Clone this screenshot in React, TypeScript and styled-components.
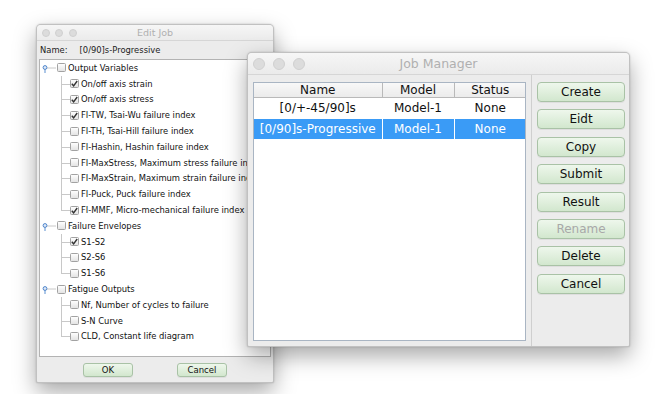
import React from 'react'
import styled, { createGlobalStyle } from 'styled-components'

const GlobalStyle = createGlobalStyle`
  html, body {
    margin: 0;
    padding: 0;
    background: #fff;
  }
  body {
    font-family: 'DejaVu Sans', 'Liberation Sans', sans-serif;
  }
`

const Desktop = styled.div`
  position: relative;
  width: 660px;
  height: 394px;
  overflow: hidden;
  background: #fff;
`

// windows sit on a free desktop, so they are placed by coordinates
const Window = styled.div<{ $x: number; $y: number; $w: number; $h: number }>`
  position: absolute;
  left: ${({ $x }) => $x}px;
  top: ${({ $y }) => $y}px;
  width: ${({ $w }) => $w}px;
  height: ${({ $h }) => $h}px;
  display: flex;
  flex-direction: column;
  box-sizing: border-box;
  background: #ececec;
  border: 1px solid rgba(0, 0, 0, 0.18);
  border-radius: 5px 5px 2px 2px;
  box-shadow: 0 9px 22px rgba(0, 0, 0, 0.34), 0 0 2px rgba(0, 0, 0, 0.2);
  overflow: hidden;
`

const TitleBar = styled.div<{ $h: number; $size: number }>`
  display: grid;
  grid-template-columns: 1fr auto 1fr;
  align-items: center;
  height: ${({ $h }) => $h}px;
  flex: none;
  padding: 0 5px;
  background: linear-gradient(#f6f6f6, #ebebeb);
  border-bottom: 1px solid #d6d6d6;
  color: #b0b0b0;
  font-size: ${({ $size }) => $size}px;
`

const Lights = styled.div<{ $gap: number }>`
  display: flex;
  gap: ${({ $gap }) => $gap}px;
`

const Light = styled.span<{ $d: number }>`
  width: ${({ $d }) => $d}px;
  height: ${({ $d }) => $d}px;
  border-radius: 50%;
  box-sizing: border-box;
  background: #dcdcdc;
  border: 1px solid #d0d0d0;
`

/* ---------- Edit Job ---------- */

const NameRow = styled.div`
  display: flex;
  align-items: center;
  gap: 12px;
  height: 18px;
  padding-left: 3px;
  font-size: 8.4px;
  color: #222;
`

const TreePanel = styled.div`
  flex: 1;
  margin: 0 2px;
  background: #fff;
  border: 1px solid #b3b3b3;
  overflow: hidden;
`

const TreeRow = styled.div<{ $level: number }>`
  display: flex;
  align-items: center;
  height: 15.8px;
  padding-left: ${({ $level }) => ($level === 0 ? 2 : 21)}px;
  font-size: 8.4px;
  color: #111;
  white-space: nowrap;
`

const Connector = styled.span<{ $last?: boolean }>`
  position: relative;
  width: 9px;
  height: 100%;
  flex: none;

  &::before {
    content: '';
    position: absolute;
    left: 0;
    top: 0;
    bottom: ${({ $last }) => ($last ? '50%' : '0')};
    border-left: 1px solid #c8c8c8;
  }
  &::after {
    content: '';
    position: absolute;
    left: 0;
    right: 0;
    top: 50%;
    border-top: 1px solid #c8c8c8;
  }
`

const Box = styled.span`
  width: 9px;
  height: 9px;
  flex: none;
  box-sizing: border-box;
  border: 1px solid #a2a2a2;
  border-radius: 1.5px;
  background: linear-gradient(#fefefe, #e4e4e4);
  display: flex;
  align-items: center;
  justify-content: center;
`

const Label = styled.span`
  margin-left: 2px;
`

const DialogButtons = styled.div`
  display: flex;
  justify-content: center;
  align-items: center;
  gap: 44px;
  height: 25px;
  flex: none;
`

const Button = styled.button<{ $small?: boolean; $disabled?: boolean }>`
  width: ${({ $small }) => ($small ? 50 : 88)}px;
  height: ${({ $small }) => ($small ? 14 : 20)}px;
  padding: 0;
  box-sizing: border-box;
  border: 1px solid #a9c2a6;
  border-radius: ${({ $small }) => ($small ? 3 : 4)}px;
  background: linear-gradient(#eef7ec, #d2e7ce);
  box-shadow: 0 1px 0 rgba(0, 0, 0, 0.06);
  font-family: 'DejaVu Sans', 'Liberation Sans', sans-serif;
  font-size: ${({ $small }) => ($small ? 8.5 : 12)}px;
  color: ${({ $disabled }) => ($disabled ? '#a8a8a8' : '#111')};
`

/* ---------- Job Manager ---------- */

const ManagerBody = styled.div`
  flex: 1;
  display: flex;
  min-height: 0;
`

const TableArea = styled.div`
  width: 284px;
  flex: none;
  display: flex;
  padding: 7px 5px 5px 5px;
  box-sizing: border-box;
  border-right: 1px solid #cfcfcf;
`

const TablePane = styled.div`
  flex: 1;
  background: #fff;
  border: 1px solid #a9b5c3;
  overflow: hidden;
`

const Table = styled.table`
  width: 100%;
  table-layout: fixed;
  border-collapse: collapse;
  font-size: 12px;
  color: #111;
`

const Th = styled.th`
  height: 14px;
  padding: 0;
  line-height: 14px;
  font-weight: normal;
  background: linear-gradient(#f8f8f8, #ebebeb);
  border-right: 1px solid #b9b9b9;
  border-bottom: 1px solid #b9b9b9;
  &:last-child {
    border-right: none;
  }
`

const Tr = styled.tr<{ $selected?: boolean }>`
  background: ${({ $selected }) => ($selected ? '#3a9bf6' : '#fff')};
  color: ${({ $selected }) => ($selected ? '#fff' : '#111')};
`

const Td = styled.td`
  height: 20.5px;
  padding: 0;
  text-align: center;
  white-space: nowrap;
  overflow: hidden;
  border-right: 1px solid rgba(255, 255, 255, 0.55);
  &:last-child {
    border-right: none;
  }
`

const ButtonColumn = styled.div`
  flex: 1;
  display: flex;
  flex-direction: column;
  gap: 7.4px;
  padding: 7px 4px 0 5px;
`

const Handle = () => (
  <svg width="15" height="10" viewBox="0 0 15 10" style={{ flex: 'none' }}>
    <line x1="5" y1="5" x2="14" y2="5" stroke="#c8c8c8" strokeWidth="1" />
    <line x1="3" y1="6" x2="3" y2="10" stroke="#5b8fd0" strokeWidth="1" />
    <circle cx="3" cy="4.5" r="1.9" fill="#dfe9f7" stroke="#4f86cc" strokeWidth="1" />
  </svg>
)

const Check = ({ checked }: { checked?: boolean }) => (
  <Box>
    {checked && (
      <svg width="7" height="7" viewBox="0 0 7 7">
        <path d="M0.8 3.8 L2.6 5.8 L6.2 1" fill="none" stroke="#333" strokeWidth="1.4" />
      </svg>
    )}
  </Box>
)

type Node = { label: string; checked?: boolean; children?: { label: string; checked?: boolean }[] }

const tree: Node[] = [
  {
    label: 'Output Variables',
    children: [
      { label: 'On/off axis strain', checked: true },
      { label: 'On/off axis stress', checked: true },
      { label: 'FI-TW, Tsai-Wu failure index', checked: true },
      { label: 'FI-TH, Tsai-Hill failure index' },
      { label: 'FI-Hashin, Hashin failure index' },
      { label: 'FI-MaxStress, Maximum stress failure index' },
      { label: 'FI-MaxStrain, Maximum strain failure index' },
      { label: 'FI-Puck, Puck failure index' },
      { label: 'FI-MMF, Micro-mechanical failure index', checked: true }
    ]
  },
  {
    label: 'Failure Envelopes',
    children: [{ label: 'S1-S2', checked: true }, { label: 'S2-S6' }, { label: 'S1-S6' }]
  },
  {
    label: 'Fatigue Outputs',
    children: [
      { label: 'Nf, Number of cycles to failure' },
      { label: 'S-N Curve' },
      { label: 'CLD, Constant life diagram' }
    ]
  }
]

const jobs = [
  { name: '[0/+-45/90]s', model: 'Model-1', status: 'None' },
  { name: '[0/90]s-Progressive', model: 'Model-1', status: 'None', selected: true }
]

const actions = ['Create', 'Eidt', 'Copy', 'Submit', 'Result', 'Rename', 'Delete', 'Cancel']

const EditJob = () => (
  <Window $x={36} $y={24} $w={238} $h={359}>
    <TitleBar $h={15} $size={9.5}>
      <Lights $gap={5.3}>
        <Light $d={8} />
        <Light $d={8} />
        <Light $d={8} />
      </Lights>
      <span>Edit Job</span>
      <span />
    </TitleBar>
    <NameRow>
      <span>Name:</span>
      <span>[0/90]s-Progressive</span>
    </NameRow>
    <TreePanel>
      {tree.map((node) => (
        <React.Fragment key={node.label}>
          <TreeRow $level={0}>
            <Handle />
            <Check checked={node.checked} />
            <Label>{node.label}</Label>
          </TreeRow>
          {node.children?.map((child, i) => (
            <TreeRow $level={1} key={child.label}>
              <Connector $last={i === node.children!.length - 1} />
              <Check checked={child.checked} />
              <Label>{child.label}</Label>
            </TreeRow>
          ))}
        </React.Fragment>
      ))}
    </TreePanel>
    <DialogButtons>
      <Button $small>OK</Button>
      <Button $small>Cancel</Button>
    </DialogButtons>
  </Window>
)

const JobManager = () => (
  <Window $x={247} $y={52} $w={383} $h={295}>
    <TitleBar $h={21} $size={12.5}>
      <Lights $gap={8}>
        <Light $d={12} />
        <Light $d={12} />
        <Light $d={12} />
      </Lights>
      <span>Job Manager</span>
      <span />
    </TitleBar>
    <ManagerBody>
      <TableArea>
        <TablePane>
          <Table>
            <colgroup>
              <col style={{ width: 128 }} />
              <col style={{ width: 72 }} />
              <col style={{ width: 72 }} />
            </colgroup>
            <thead>
              <tr>
                <Th>Name</Th>
                <Th>Model</Th>
                <Th>Status</Th>
              </tr>
            </thead>
            <tbody>
              {jobs.map((job) => (
                <Tr key={job.name} $selected={job.selected}>
                  <Td>{job.name}</Td>
                  <Td>{job.model}</Td>
                  <Td>{job.status}</Td>
                </Tr>
              ))}
            </tbody>
          </Table>
        </TablePane>
      </TableArea>
      <ButtonColumn>
        {actions.map((a) => (
          <Button key={a} $disabled={a === 'Rename'}>
            {a}
          </Button>
        ))}
      </ButtonColumn>
    </ManagerBody>
  </Window>
)

export default function App() {
  return (
    <>
      <GlobalStyle />
      <Desktop>
        <EditJob />
        <JobManager />
      </Desktop>
    </>
  )
}
